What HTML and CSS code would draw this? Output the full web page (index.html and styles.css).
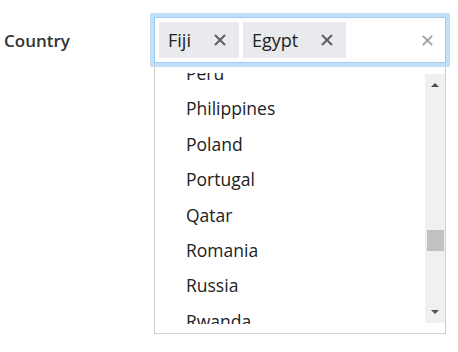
FILE: index.html
```html
<!DOCTYPE html>
<html lang="en">
<head>
    <meta charset="UTF-8">
    <meta name="viewport" content="width=device-width, initial-scale=1.0">
    <title>Country Picker</title>
    <link rel="stylesheet" href="styles.css">
</head>
<body>

    <div class="field">
        <label class="field-label">Country</label>

        <div class="select">
            <!-- Selected values -->
            <div class="control">
                <span class="tag">Fiji
                    <svg class="tag-remove" viewBox="0 0 14 14"><path d="M2 2L12 12M12 2L2 12"/></svg>
                </span>
                <span class="tag">Egypt
                    <svg class="tag-remove" viewBox="0 0 14 14"><path d="M2 2L12 12M12 2L2 12"/></svg>
                </span>
                <svg class="clear" viewBox="0 0 14 14"><path d="M2 2L12 12M12 2L2 12"/></svg>
            </div>

            <!-- Open dropdown -->
            <div class="menu">
                <div class="menu-view">
                    <ul class="options">
                        <li>Peru</li>
                        <li>Philippines</li>
                        <li>Poland</li>
                        <li>Portugal</li>
                        <li>Qatar</li>
                        <li>Romania</li>
                        <li>Russia</li>
                        <li>Rwanda</li>
                    </ul>
                </div>
                <div class="scrollbar">
                    <span class="arrow-up"></span>
                    <span class="track">
                        <span class="thumb"></span>
                    </span>
                    <span class="arrow-down"></span>
                </div>
            </div>
        </div>
    </div>

</body>
</html>
```

FILE: styles.css
```css
body {
    font-family: "Open Sans", "Noto Sans", sans-serif;
    margin: 0;
    padding: 0;
    color: #222;
    background: #fff;
}
.field {
    display: flex;
    align-items: flex-start;
    padding: 17px 0 0 4px;
}
.field-label {
    width: 150px;
    height: 46px;
    display: flex;
    align-items: center;
    font-size: 17px;
    font-weight: 600;
    color: #333;
}
.select {
    width: 292px;
}
.control {
    box-sizing: border-box;
    height: 46px;
    border: 1px solid #9fcbf0;
    box-shadow: 0 0 0 4px #c4e0f8;
    display: flex;
    align-items: center;
    gap: 4px;
    padding: 0 4px;
}
.tag {
    height: 36px;
    display: flex;
    align-items: center;
    background-color: #e8eaed;
    font-size: 18px;
    padding: 0 12px 0 9px;
    color: #222;
}
.tag-remove {
    width: 14px;
    height: 14px;
    margin-left: 22px;
    stroke: #5f5f5f;
    stroke-width: 2;
    fill: none;
}
.clear {
    width: 13px;
    height: 13px;
    margin-left: auto;
    margin-right: 7px;
    stroke: #a0a0a0;
    stroke-width: 2;
    fill: none;
}
.menu {
    box-sizing: border-box;
    height: 271px;
    border: 1px solid #d0d0d0;
    border-top: none;
    display: flex;
    padding: 10px 0 9px 0;
}
.menu-view {
    flex: 1;
    overflow: hidden;
}
.options {
    list-style: none;
    margin: -17px 0 0 0;
    padding: 0;
}
.options li {
    font-size: 17.5px;
    line-height: 23.4px;
    padding: 6px 0 6px 31px;
}
.scrollbar {
    width: 20px;
    margin-top: 1px;
    margin-bottom: 1px;
    background-color: #f0f0f0;
    display: flex;
    flex-direction: column;
    align-items: center;
}
.arrow-up,
.arrow-down {
    width: 0;
    height: 0;
    border-left: 4px solid transparent;
    border-right: 4px solid transparent;
    margin: 9px 0;
}
.arrow-up {
    border-bottom: 4px solid #505050;
}
.arrow-down {
    border-top: 4px solid #505050;
}
.track {
    flex: 1;
    width: 100%;
    display: flex;
    justify-content: center;
}
.thumb {
    width: 17px;
    height: 21px;
    margin-top: 134px;
    background-color: #c1c1c1;
}
```
